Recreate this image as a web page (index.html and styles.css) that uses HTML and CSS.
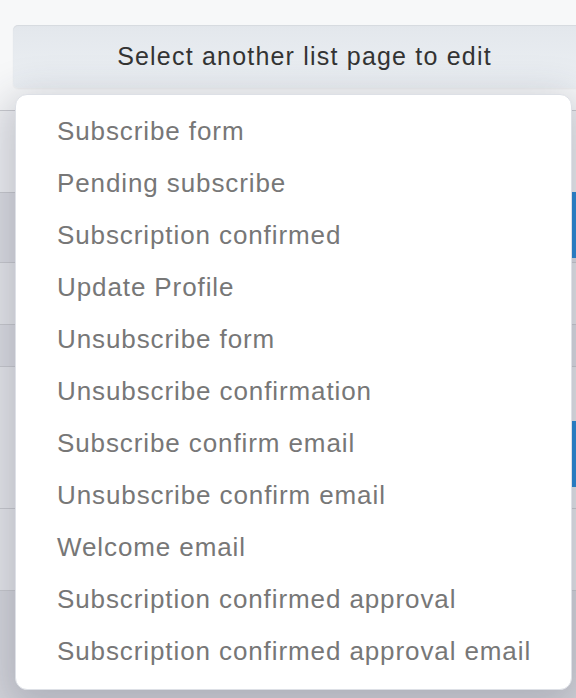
FILE: index.html
```html
<!DOCTYPE html>
<html lang="en">
<head>
    <meta charset="UTF-8">
    <meta name="viewport" content="width=device-width, initial-scale=1.0">
    <title>List pages</title>
    <link rel="stylesheet" href="styles.css">
</head>
<body>
    <!-- tabla de fondo, tapada por el menu -->
    <div class="page">
        <div class="row row-head"></div>
        <div class="row row-dark"><span class="btn-blue"></span></div>
        <div class="row"></div>
        <div class="row row-dark row-small"></div>
        <div class="row row-tall"><span class="btn-blue btn-low"></span></div>
        <div class="row"></div>
        <div class="row row-last"></div>
    </div>

    <div class="picker">
        <button class="picker-toggle">Select another list page to edit</button>
        <ul class="picker-menu">
            <li><a href="#">Subscribe form</a></li>
            <li><a href="#">Pending subscribe</a></li>
            <li><a href="#">Subscription confirmed</a></li>
            <li><a href="#">Update Profile</a></li>
            <li><a href="#">Unsubscribe form</a></li>
            <li><a href="#">Unsubscribe confirmation</a></li>
            <li><a href="#">Subscribe confirm email</a></li>
            <li><a href="#">Unsubscribe confirm email</a></li>
            <li><a href="#">Welcome email</a></li>
            <li><a href="#">Subscription confirmed approval</a></li>
            <li><a href="#">Subscription confirmed approval email</a></li>
        </ul>
    </div>
</body>
</html>
```

FILE: styles.css
```css
* {
    margin: 0;
    padding: 0;
    box-sizing: border-box;
    font-family: 'Liberation Sans', Arial, sans-serif;
}

body {
    background: #f7f8f9;
    overflow: hidden;
    height: 698px;
}

/* tabla de fondo */
.page {
    padding-top: 110px;
}

.row {
    height: 82px;
    border-top: 1px solid #c9cacf;
    background: #e6e7eb;
    position: relative;
}

.row-head {
    background: #eeeff2;
}

.row-dark {
    height: 70px;
    background: #dcdde3;
}

.row-small {
    height: 42px;
}

.row:nth-child(3) {
    height: 62px;
}

.row-tall {
    height: 142px;
}

.row-last {
    height: 120px;
    background: #d6d7dd;
}

.btn-blue {
    position: absolute;
    right: -20px;
    top: -1px;
    width: 24px;
    height: 66px;
    background: #2a89d5;
}

.btn-low {
    top: 54px;
}

/* selector de paginas */
.picker {
    position: absolute;
    top: 25px;
    left: 13px;
}

.picker-toggle {
    display: flex;
    align-items: center;
    justify-content: center;
    width: 583px;
    height: 63px;
    border: 0;
    border-radius: 5px;
    background: linear-gradient(#e3e7ec, #ecf0f4);
    box-shadow: inset 0 1px 1px rgba(0, 0, 0, 0.06), 0 1px 2px rgba(0, 0, 0, 0.05);
    color: #333;
    font-size: 25px;
    letter-spacing: 1.2px;
    cursor: pointer;
}

.picker-menu {
    list-style: none;
    margin: 6px 0 0 2px;
    width: 557px;
    padding: 10px 0 12px;
    background: #fff;
    border: 1px solid #dde0e6;
    border-radius: 12px;
    box-shadow: 0 12px 40px 10px rgba(40, 44, 70, 0.22);
}

.picker-menu li a {
    display: block;
    padding-left: 41px;
    line-height: 52px;
    font-size: 26px;
    letter-spacing: 0.9px;
    color: #777;
    text-decoration: none;
}
```
